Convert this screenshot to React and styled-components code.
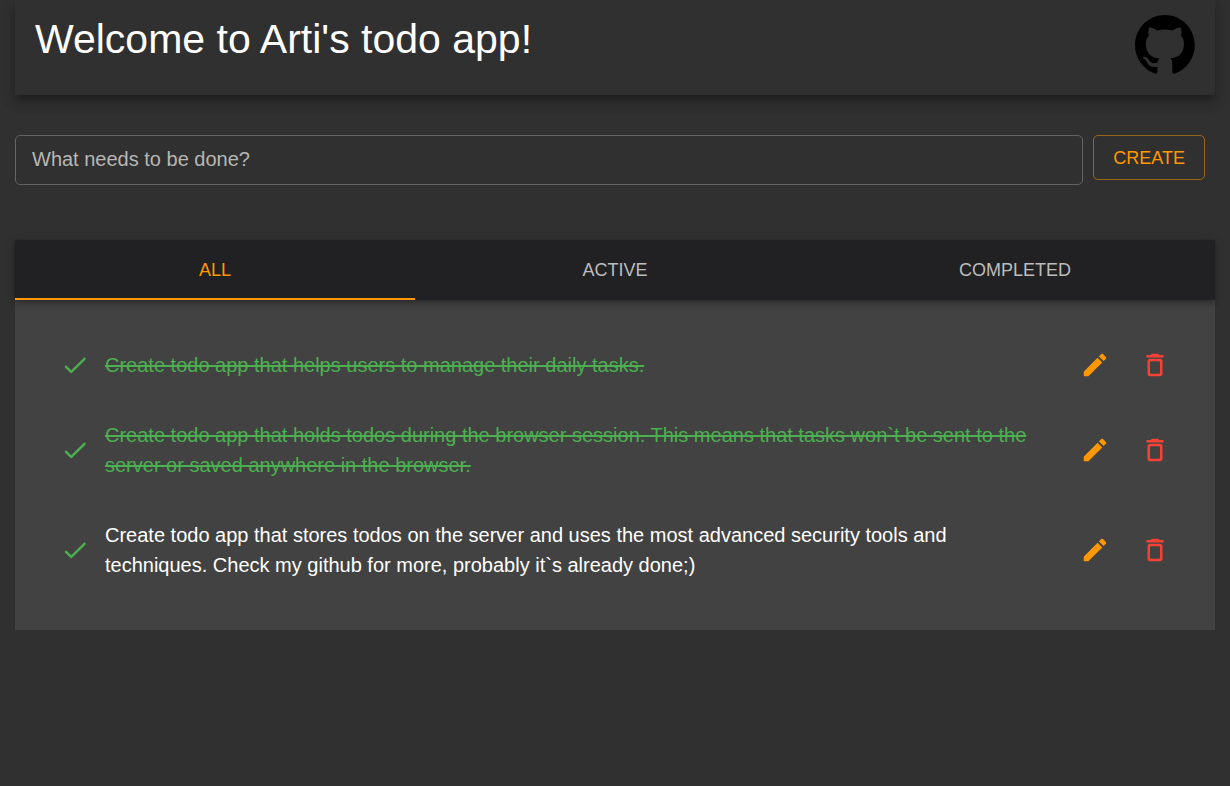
import React, { useState } from "react";
import styled, { createGlobalStyle } from "styled-components";

const GlobalStyle = createGlobalStyle`
  *, *::before, *::after { box-sizing: border-box; }
  body {
    margin: 0;
    background: #303030;
    color: #fff;
    font-family: "Liberation Sans", Arial, sans-serif;
    font-size: 20px;
    line-height: 30px;
  }
`;

const Page = styled.div`
  padding: 0 15px;
`;

const Header = styled.header`
  display: flex;
  justify-content: space-between;
  align-items: flex-start;
  padding: 15px 20px 20px;
  box-shadow:
    0 5px 5px -3px rgba(0, 0, 0, 0.2),
    0 8px 10px 1px rgba(0, 0, 0, 0.14),
    0 3px 14px 2px rgba(0, 0, 0, 0.12);
`;

const Title = styled.h1`
  margin: 0;
  font-size: 41px;
  font-weight: 400;
  line-height: 48px;
`;

const HomeLink = styled.a`
  display: block;
  width: 60px;
  height: 60px;
  color: #000;
`;

const Form = styled.form`
  display: flex;
  align-items: flex-start;
  gap: 10px;
  margin: 40px 10px 55px 0;
`;

const TaskInput = styled.input`
  flex: 1;
  min-width: 0;
  height: 50px;
  padding: 0 16px 2px;
  border: 1px solid #636363;
  border-radius: 5px;
  background: transparent;
  color: #fff;
  font: inherit;
  &::placeholder {
    color: #b7b7b5;
    opacity: 1;
  }
`;

const CreateButton = styled.button`
  height: 45px;
  padding: 0 19px;
  border: 1px solid rgba(255, 152, 0, 0.5);
  border-radius: 5px;
  background: transparent;
  color: #ff9800;
  font: inherit;
  font-size: 18px;
  text-transform: uppercase;
`;

const Tabs = styled.div`
  position: relative;
  display: grid;
  grid-template-columns: repeat(3, 1fr);
  background: #212123;
  box-shadow:
    0 2px 4px -1px rgba(0, 0, 0, 0.2),
    0 4px 5px 0 rgba(0, 0, 0, 0.14),
    0 1px 10px 0 rgba(0, 0, 0, 0.12);
`;

const Tab = styled.button`
  height: 60px;
  padding: 2px 0 0;
  border: 0;
  border-bottom: 2px solid ${(p) => (p.$selected ? "#ff9800" : "transparent")};
  background: transparent;
  color: ${(p) => (p.$selected ? "#ff9800" : "#bcbcbd")};
  font: inherit;
  font-size: 18px;
  text-transform: uppercase;
`;

const List = styled.ul`
  margin: 0;
  padding: 30px;
  background: #424242;
  list-style: none;
`;

const Item = styled.li`
  display: flex;
  align-items: center;
`;

const Task = styled.p`
  flex: 1;
  margin: 0;
  padding: 20px 15px 20px 0;
  color: ${(p) => (p.$done ? "#4caf50" : "#fff")};
  text-decoration: ${(p) => (p.$done ? "line-through" : "none")};
`;

const IconButton = styled.button`
  display: flex;
  padding: 15px;
  border: 0;
  background: transparent;
  color: ${(p) => p.$color};
`;

const Icon = ({ path }) => (
  <svg width="30" height="30" viewBox="0 0 24 24" fill="currentColor" aria-hidden="true">
    <path d={path} />
  </svg>
);

const DONE =
  "M9 16.2l-3.5-3.5c-.39-.39-1.01-.39-1.4 0-.39.39-.39 1.01 0 1.4l4.19 4.19c.39.39 1.02.39 1.41 0L20.3 7.7c.39-.39.39-1.01 0-1.4-.39-.39-1.01-.39-1.4 0L9 16.2z";
const EDIT =
  "M3 17.46v3.04c0 .28.22.5.5.5h3.04c.13 0 .26-.05.35-.15L17.81 9.94l-3.75-3.75L3.15 17.1c-.1.1-.15.22-.15.36zM20.71 7.04c.39-.39.39-1.02 0-1.41l-2.34-2.34c-.39-.39-1.02-.39-1.41 0l-1.83 1.83 3.75 3.75 1.83-1.83z";
const REMOVE =
  "M6 19c0 1.1.9 2 2 2h8c1.1 0 2-.9 2-2V9c0-1.1-.9-2-2-2H8c-1.1 0-2 .9-2 2v10zM9 9h6c.55 0 1 .45 1 1v8c0 .55-.45 1-1 1H9c-.55 0-1-.45-1-1v-8c0-.55.45-1 1-1zm6.5-5l-.71-.71c-.18-.18-.44-.29-.7-.29H9.91c-.26 0-.52.11-.7.29L8.5 4H6c-.55 0-1 .45-1 1s.45 1 1 1h12c.55 0 1-.45 1-1s-.45-1-1-1h-2.5z";
const GITHUB =
  "M48.854 0C21.839 0 0 22 0 49.217c0 21.756 13.993 40.172 33.405 46.69 2.427.49 3.316-1.059 3.316-2.362 0-1.141-.08-5.052-.08-9.127-13.59 2.934-16.42-5.867-16.42-5.867-2.184-5.704-5.42-7.17-5.42-7.17-4.448-3.015.324-3.015.324-3.015 4.934.326 7.523 5.052 7.523 5.052 4.367 7.496 11.404 5.378 14.235 4.074.404-3.178 1.699-5.378 3.074-6.6-10.839-1.141-22.243-5.378-22.243-24.283 0-5.378 1.94-9.778 5.014-13.2-.485-1.222-2.184-6.275.486-13.038 0 0 4.125-1.304 13.426 5.052a46.97 46.97 0 0 1 12.214-1.63c4.125 0 8.33.571 12.213 1.63 9.302-6.356 13.427-5.052 13.427-5.052 2.67 6.763.97 11.816.485 13.038 3.155 3.422 5.015 7.822 5.015 13.2 0 18.905-11.404 23.06-22.324 24.283 1.78 1.548 3.316 4.481 3.316 9.126 0 6.6-.08 11.897-.08 13.526 0 1.304.89 2.853 3.316 2.364 19.412-6.52 33.405-24.935 33.405-46.691C97.707 22 75.788 0 48.854 0z";

const TABS = ["All", "Active", "Completed"];

const TODOS = [
  { id: 1, done: true, text: "Create todo app that helps users to manage their daily tasks." },
  {
    id: 2,
    done: true,
    text: "Create todo app that holds todos during the browser session. This means that tasks won`t be sent to the server or saved anywhere in the browser.",
  },
  {
    id: 3,
    done: false,
    text: "Create todo app that stores todos on the server and uses the most advanced security tools and techniques. Check my github for more, probably it`s already done;)",
  },
];

export default function App() {
  const [todos, setTodos] = useState(TODOS);
  const [tab, setTab] = useState("All");
  const [draft, setDraft] = useState("");

  const create = (e) => {
    e.preventDefault();
    if (!draft.trim()) return;
    setTodos([...todos, { id: Date.now(), done: false, text: draft }]);
    setDraft("");
  };
  const toggle = (id) =>
    setTodos(todos.map((t) => (t.id === id ? { ...t, done: !t.done } : t)));
  const remove = (id) => setTodos(todos.filter((t) => t.id !== id));

  const visible = todos.filter(
    (t) => tab === "All" || (tab === "Completed" ? t.done : !t.done)
  );

  return (
    <Page>
      <GlobalStyle />
      <Header>
        <Title>Welcome to Arti's todo app!</Title>
        <HomeLink href="#github" aria-label="GitHub">
          <svg
            width="60"
            height="60"
            viewBox="0 0 98 96"
            preserveAspectRatio="xMidYMin meet"
            fill="currentColor"
            aria-hidden="true"
          >
            <path fillRule="evenodd" d={GITHUB} />
          </svg>
        </HomeLink>
      </Header>
      <main>
        <Form onSubmit={create}>
          <TaskInput
            aria-label="What needs to be done?"
            placeholder="What needs to be done?"
            value={draft}
            onChange={(e) => setDraft(e.target.value)}
          />
          <CreateButton type="submit">Create</CreateButton>
        </Form>
        <Tabs role="tablist">
          {TABS.map((name) => (
            <Tab
              key={name}
              type="button"
              role="tab"
              aria-selected={tab === name}
              $selected={tab === name}
              onClick={() => setTab(name)}
            >
              {name}
            </Tab>
          ))}
        </Tabs>
        <List>
          {visible.map((t) => (
            <Item key={t.id}>
              <IconButton type="button" $color="#4caf50" aria-label="Toggle done" onClick={() => toggle(t.id)}>
                <Icon path={DONE} />
              </IconButton>
              <Task $done={t.done}>{t.text}</Task>
              <IconButton type="button" $color="#ff9800" aria-label="Edit">
                <Icon path={EDIT} />
              </IconButton>
              <IconButton type="button" $color="#f44336" aria-label="Delete" onClick={() => remove(t.id)}>
                <Icon path={REMOVE} />
              </IconButton>
            </Item>
          ))}
        </List>
      </main>
    </Page>
  );
}
